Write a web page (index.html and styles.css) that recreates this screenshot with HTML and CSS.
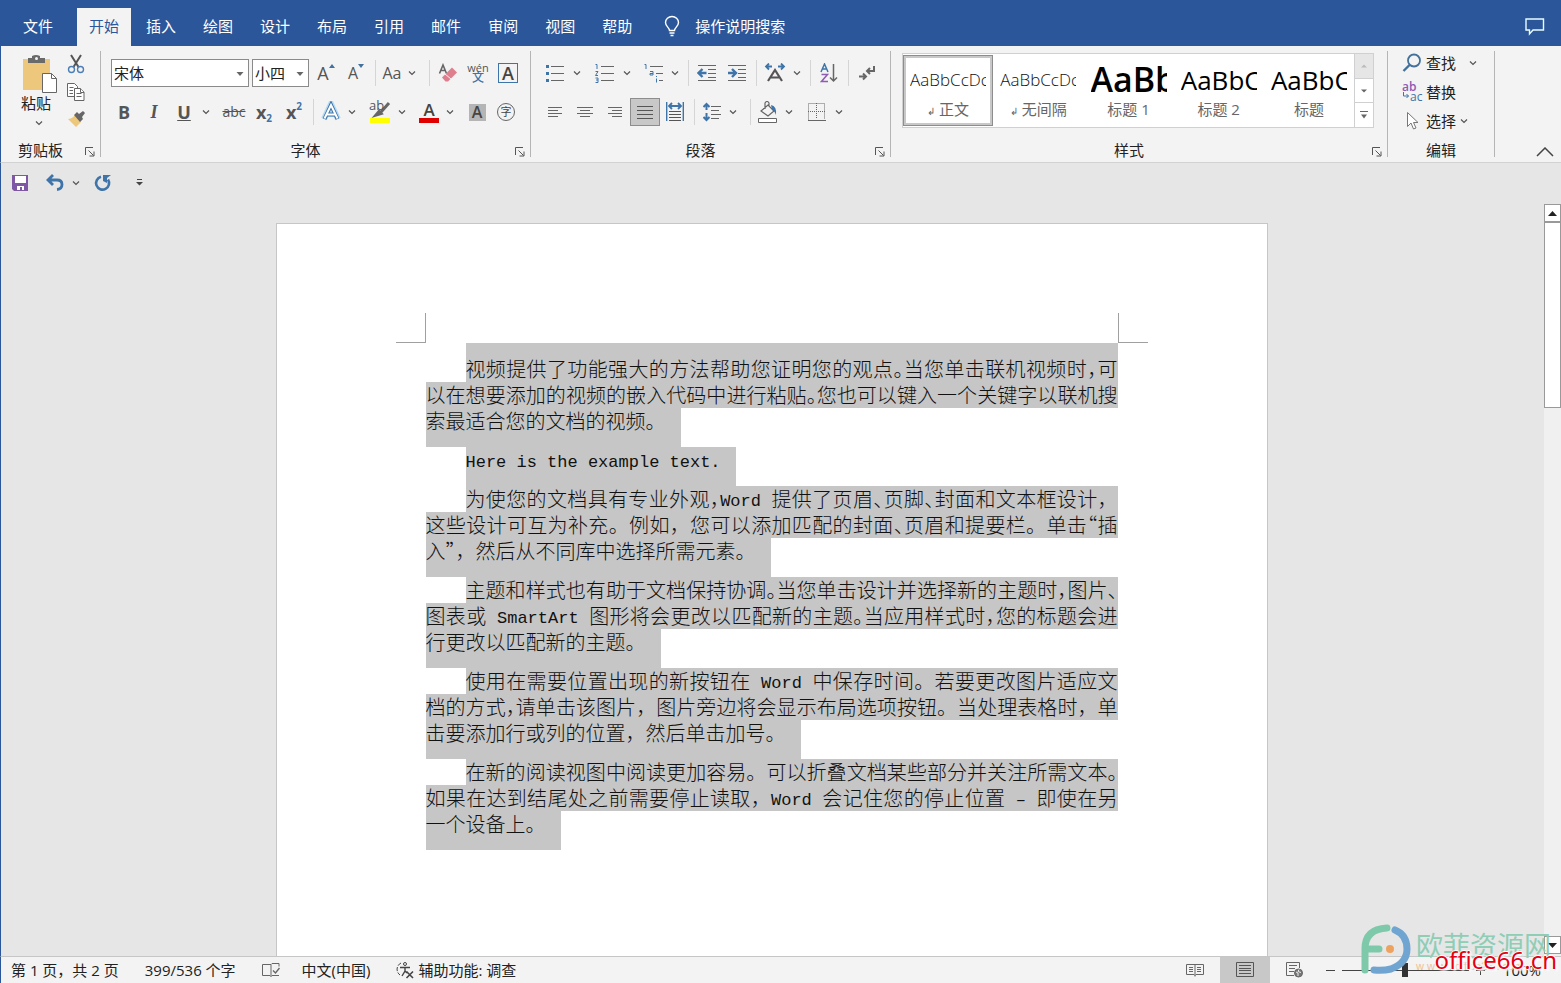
FILE: index.html
```html
<!DOCTYPE html>
<html lang="zh-CN">
<head>
<meta charset="utf-8">
<title>文档</title>
<link rel="stylesheet" href="styles.css">
</head>
<body>
<svg class="defs" aria-hidden="true">
  <symbol id="chev" viewBox="0 0 8 8"><path d="M1 2.500 4 5.500l3-3" fill="none" stroke="#555" stroke-width="1.200"/></symbol>
  <symbol id="launch" viewBox="0 0 10 10"><path d="M.5 8V.5H8M3.500 3.500l5 5M9 4.500V9H4.500" fill="none" stroke="#555"/></symbol>
</svg>

<header class="tabs">
  <button class="tab file">文件</button>
  <nav class="tab-list">
    <button class="tab active">开始</button>
    <button class="tab">插入</button>
    <button class="tab">绘图</button>
    <button class="tab">设计</button>
    <button class="tab">布局</button>
    <button class="tab">引用</button>
    <button class="tab">邮件</button>
    <button class="tab">审阅</button>
    <button class="tab">视图</button>
    <button class="tab">帮助</button>
  </nav>
  <button class="tell-me">
    <svg width="18" height="22" viewBox="0 0 18 22" fill="none" stroke="#fff" stroke-width="1.400"><path d="M6.500 15.500c0-3-4-4-4-8a6.500 6 0 0 1 13 0c0 4-4 5-4 8zM6.500 18h5M7.500 20.500h3"/></svg>
    <span>操作说明搜索</span>
  </button>
  <button class="comment" aria-label="批注">
    <svg width="20" height="18" viewBox="0 0 20 18" fill="none" stroke="#e8fbff" stroke-width="1.400"><path d="M1 1h17.500v11H8l-3.500 4v-4H1z"/></svg>
  </button>
</header>

<section class="ribbon">
  <div class="group clipboard">
    <div class="clip-body">
      <button class="paste">
        <svg width="36" height="38" viewBox="0 0 36 38"><path d="M2 4h27v31H2z" fill="#ecc77c"/><path d="M7 8V3h4V1q4-2 8 0v2h5v5z" fill="#6a6a6a"/><circle cx="15.500" cy="3.500" r="1.500" fill="#f3f3f3"/><path d="M21.500 18.500h9l5 5v14h-14z" fill="#fff" stroke="#666"/><path d="M30.500 18.500v5h5" fill="none" stroke="#666"/></svg>
        <span>粘贴</span>
        <svg width="8" height="8"><use href="#chev"/></svg>
      </button>
      <div class="clip-side">
        <button aria-label="剪切"><svg width="18" height="20" viewBox="0 0 18 20" fill="none"><path d="M4 1l7.500 12M14 1L6.500 13" stroke="#555" stroke-width="2"/><circle cx="4.500" cy="15.500" r="3" stroke="#4a7fb5" stroke-width="1.400"/><circle cx="13.500" cy="15.500" r="3" stroke="#4a7fb5" stroke-width="1.400"/></svg></button>
        <button aria-label="复制"><svg width="18" height="20" viewBox="0 0 18 20" fill="#fff" stroke="#666"><path d="M.5 1.500h7l3 3v10H.5z"/><path d="M7.500 6.500h6l3.500 3.500v8.500H7.500z"/><path d="M2.500 5.500h4M2.500 8.500h3.500M2.500 11.500h3.500M9.500 11.500h5M9.500 14.500h5M13.500 6.500v4h3.500"/></svg></button>
        <button aria-label="格式刷"><svg width="18" height="18" viewBox="0 0 18 18"><path d="M8 5l6 7-5 5-8-8q4 0 7-4z" fill="#ecc77c"/><path d="M7 5l3-3 2 2 4-3 2 2-3 4 1 2-3 3z" fill="#666"/></svg></button>
      </div>
    </div>
    <div class="group-foot"><span>剪贴板</span><button class="launch" aria-label="剪贴板选项"><svg width="10" height="10"><use href="#launch"/></svg></button></div>
  </div>

  <div class="group font">
    <div class="rows">
      <div class="row">
        <span class="combo family"><select aria-label="字体"><option>宋体</option></select><svg width="8" height="5"><path d="M.5 0h7L4 4z" fill="#666"/></svg></span>
        <span class="combo size"><select aria-label="字号"><option>小四</option></select><svg width="8" height="5"><path d="M.5 0h7L4 4z" fill="#666"/></svg></span>
        <button class="btn glyph" aria-label="增大字号">A<svg class="tick" width="6" height="4"><path d="M0 4l3-4 3 4z" fill="#41719c"/></svg></button>
        <button class="btn glyph small" aria-label="减小字号">A<svg class="tick" width="6" height="4"><path d="M0 0l3 4 3-4z" fill="#41719c"/></svg></button>
        <i class="sep"></i>
        <button class="btn narrow glyph small">Aa</button>
        <button class="chev" aria-label="更改大小写"><svg width="8" height="8"><use href="#chev"/></svg></button>
        <i class="sep"></i>
        <button class="btn" aria-label="清除格式"><svg width="20" height="20" viewBox="0 0 20 20"><path d="M1.500 10.500L5 2l3.500 8.500M2.500 7.500h5" fill="none" stroke="#666" stroke-width="1.600"/><path d="M14 4.500l5 5-9 9H7.500l-3.500-4z" fill="#df7f8d"/><path d="M7 11l6 5" stroke="#f3f3f3"/></svg></button>
        <button class="btn pinyin"><span>wén</span><b>文</b></button>
        <button class="btn" aria-label="字符边框"><span class="boxed">A</span></button>
      </div>
      <div class="row">
        <button class="btn glyph bold">B</button>
        <button class="btn glyph italic">I</button>
        <button class="btn glyph bold under">U</button>
        <button class="chev" aria-label="下划线样式"><svg width="8" height="8"><use href="#chev"/></svg></button>
        <button class="btn strike">abc</button>
        <button class="btn glyph bold">x<sub>2</sub></button>
        <button class="btn glyph bold">x<sup>2</sup></button>
        <i class="sep"></i>
        <button class="btn mid" aria-label="文本效果"><svg width="20" height="22" viewBox="0 0 20 22"><path d="M3 18L10 3l7 15M6 13h8" fill="none" stroke="#b5dbf4" stroke-width="6"/><path d="M3.500 18L10 4l6.500 14M6 13.500h8" fill="none" stroke="#3f74a8" stroke-width="4"/><path d="M3.500 17.500L10 4l6.500 13.500M6 13.500h8" fill="none" stroke="#fff" stroke-width="2"/></svg></button>
        <button class="chev" aria-label="更多文本效果"><svg width="8" height="8"><use href="#chev"/></svg></button>
        <button class="btn stack" aria-label="突出显示"><span>ab</span><svg width="22" height="22" viewBox="0 0 22 22"><path d="M20 2l-8 9M7 14l5-1.500-2-2z" stroke="#666" stroke-width="3"/><path d="M1 17h20v5H1z" fill="#ff0"/></svg></button>
        <button class="chev" aria-label="突出显示颜色"><svg width="8" height="8"><use href="#chev"/></svg></button>
        <button class="btn mid" aria-label="字体颜色"><span class="color-a">A</span></button>
        <button class="chev" aria-label="更多字体颜色"><svg width="8" height="8"><use href="#chev"/></svg></button>
        <button class="btn mid" aria-label="字符底纹"><span class="shaded">A</span></button>
        <button class="btn" aria-label="带圈字符"><span class="circled">字</span></button>
      </div>
    </div>
    <div class="group-foot"><span>字体</span><button class="launch" aria-label="字体选项"><svg width="10" height="10"><use href="#launch"/></svg></button></div>
  </div>

  <div class="group para">
    <div class="rows">
      <div class="row">
        <button class="btn" aria-label="项目符号"><svg width="20" height="18" viewBox="0 0 20 18"><path d="M6 2.500h13M6 9.500h13M6 16.500h13" stroke="#666"/><path d="M1 1h3v3H1zM1 8h3v3H1zM1 15h3v3H1z" fill="#3f74a8"/></svg></button>
        <button class="chev" aria-label="更多项目符号"><svg width="8" height="8"><use href="#chev"/></svg></button>
        <button class="btn" aria-label="编号"><svg width="20" height="20" viewBox="0 0 20 20"><path d="M6 3.500h13M6 10.500h13M6 17.500h13" stroke="#666"/><path d="M.5 1.500H2V6M.5 8.500H3L.5 12.500H3M.5 15H3v4.500H.5M1 17h2" fill="none" stroke="#3f74a8"/></svg></button>
        <button class="chev" aria-label="更多编号"><svg width="8" height="8"><use href="#chev"/></svg></button>
        <button class="btn mid" aria-label="多级列表"><svg width="20" height="20" viewBox="0 0 20 20"><path d="M6 3.500h13M12 10.500h7M15 17.500h4" stroke="#666"/><path d="M.5 1.500H2V6M6 8.500h3V12H6v-1.500h3M12.500 13v1M12.500 15.500v4" fill="none" stroke="#3f74a8"/></svg></button>
        <button class="chev tight" aria-label="更多多级列表"><svg width="8" height="8"><use href="#chev"/></svg></button>
        <i class="sep"></i>
        <button class="btn" aria-label="减少缩进"><svg width="20" height="18" viewBox="0 0 20 18"><path d="M1 1.500h18M11 5.500h8M11 9.500h8M11 13.500h8M1 16.500h18" stroke="#666"/><path d="M9.500 9H2M5.500 5l-4 4 4 4" fill="none" stroke="#3f74a8" stroke-width="2.400"/></svg></button>
        <button class="btn" aria-label="增加缩进"><svg width="20" height="18" viewBox="0 0 20 18"><path d="M1 1.500h18M11 5.500h8M11 9.500h8M11 13.500h8M1 16.500h18" stroke="#666"/><path d="M1 9h7.500M5 5l4 4-4 4" fill="none" stroke="#3f74a8" stroke-width="2.400"/></svg></button>
        <i class="sep"></i>
        <button class="btn" aria-label="中文版式"><svg width="22" height="20" viewBox="0 0 22 20" fill="none"><path d="M4 18L11 7l7 11M7 14.500h8" stroke="#555" stroke-width="2.200"/><path d="M8 3.500H2M5 .5l-3 3 3 3M14 3.500h6M17 .5l3 3-3 3" stroke="#3f74a8" stroke-width="1.800"/></svg></button>
        <button class="chev tight" aria-label="更多中文版式"><svg width="8" height="8"><use href="#chev"/></svg></button>
        <i class="sep"></i>
        <button class="btn" aria-label="排序"><svg width="18" height="20" viewBox="0 0 18 20" fill="none" stroke-width="1.500"><path d="M1 9l3.500-8L8 9M2 6h5" stroke="#3f74a8"/><path d="M1.500 11.500h6l-6 7H8" stroke="#8e5bb5"/><path d="M13.500 1v17M10 14.500l3.500 3.500 3.500-3.500" stroke="#666"/></svg></button>
        <i class="sep"></i>
        <button class="btn" aria-label="显示编辑标记"><svg width="18" height="16" viewBox="0 0 18 16" fill="none" stroke="#666" stroke-width="2"><path d="M16 1v5H9M12 3L9 6l3 3M1 11.500h7M5 8.500l3 3-3 3"/></svg></button>
      </div>
      <div class="row">
        <button class="btn" aria-label="左对齐"><svg width="16" height="12" stroke="#666"><path d="M1 1.500h14M1 4.500h10M1 7.500h14M1 10.500h10"/></svg></button>
        <button class="btn" aria-label="居中"><svg width="16" height="12" stroke="#666"><path d="M0 1.500h16M3 4.500h10M0 7.500h16M3 10.500h10"/></svg></button>
        <button class="btn" aria-label="右对齐"><svg width="16" height="12" stroke="#666"><path d="M1 1.500h14M5 4.500h10M1 7.500h14M5 10.500h10"/></svg></button>
        <button class="btn pressed" aria-label="两端对齐"><svg width="16" height="14" stroke="#555"><path d="M0 1.500h16M0 5.500h16M0 9.500h16M0 13.500h16"/></svg></button>
        <button class="btn" aria-label="分散对齐"><svg width="18" height="20" viewBox="0 0 18 20" fill="none"><path d="M.5 0v19M17.500 0v19M4 4h10M6 1L3 4l3 3M12 1l3 3-3 3" stroke="#3f74a8" stroke-width="1.800"/><path d="M3 9.500h12M3 12.500h12M3 15.500h12M3 18.500h12" stroke="#555"/></svg></button>
        <i class="sep"></i>
        <button class="btn mid" aria-label="行距"><svg width="18" height="20" viewBox="0 0 18 20" fill="none"><path d="M3.500 2v6M.5 5l3-3 3 3M3.500 11v7M.5 15l3 3 3-3" stroke="#3f74a8" stroke-width="2"/><path d="M8 4.500h10M8 8.500h8M8 12.500h10M8 16.500h8" stroke="#666"/></svg></button>
        <button class="chev" aria-label="更多行距"><svg width="8" height="8"><use href="#chev"/></svg></button>
        <i class="sep"></i>
        <button class="btn mid" aria-label="底纹"><svg width="22" height="22" viewBox="0 0 22 22" fill="none"><path d="M4 10l7-6 6 6-6 5zM8 8V2q2-3 4 0v3" stroke="#666" stroke-width="1.200"/><path d="M14 4q6 1 5 10-2-5-4-5z" fill="#3f74a8"/><path d="M1.500 17.500h18v4h-18z" fill="#fff" stroke="#666"/></svg></button>
        <button class="chev" aria-label="更多底纹"><svg width="8" height="8"><use href="#chev"/></svg></button>
        <button class="btn" aria-label="边框"><svg width="18" height="18" viewBox="0 0 18 18" fill="none" stroke="#666"><path d="M.5 16.500V.5h16v16M8.500 0v16M0 8.500h17" stroke-dasharray="1 1"/><path d="M0 17.500h18"/></svg></button>
        <button class="chev" aria-label="更多边框"><svg width="8" height="8"><use href="#chev"/></svg></button>
      </div>
    </div>
    <div class="group-foot"><span>段落</span><button class="launch" aria-label="段落选项"><svg width="10" height="10"><use href="#launch"/></svg></button></div>
  </div>

  <div class="group styles">
    <div class="gallery">
      <button class="style chosen"><span class="sample">AaBbCcDc</span><span class="name"><small>↲</small> 正文</span></button>
      <button class="style"><span class="sample">AaBbCcDc</span><span class="name"><small>↲</small> 无间隔</span></button>
      <button class="style"><span class="sample h1">AaBb</span><span class="name">标题 1</span></button>
      <button class="style"><span class="sample h2">AaBbC</span><span class="name">标题 2</span></button>
      <button class="style"><span class="sample h2">AaBbC</span><span class="name">标题</span></button>
      <div class="gallery-nav">
        <button class="off" aria-label="上一行"><svg width="6" height="4"><path d="M0 3.500h6l-3-3z" fill="#bbb"/></svg></button>
        <button aria-label="下一行"><svg width="6" height="4"><path d="M0 .5h6l-3 3z" fill="#666"/></svg></button>
        <button aria-label="更多样式"><svg width="8" height="8"><path d="M0 0h8v1H0zM1 3.500h6l-3 4z" fill="#666"/></svg></button>
      </div>
    </div>
    <div class="group-foot"><span>样式</span><button class="launch" aria-label="样式选项"><svg width="10" height="10"><use href="#launch"/></svg></button></div>
  </div>

  <div class="group edit">
    <div class="edit-body">
      <button class="edit-cmd find"><svg width="20" height="20" viewBox="0 0 20 20" fill="none" stroke="#41719c"><circle cx="12" cy="7.500" r="6" stroke-width="1.800"/><path d="M7.500 12l-6 6" stroke-width="2.400"/></svg><span>查找</span><svg width="8" height="8"><use href="#chev"/></svg></button>
      <button class="edit-cmd"><span class="swap"><b>ab</b><span><svg width="8" height="8" fill="none" stroke="#3f74a8"><path d="M1.500 0v4h5M4.500 2l2 2-2 2"/></svg>ac</span></span><span>替换</span></button>
      <button class="edit-cmd"><svg width="20" height="20" viewBox="0 0 20 20" fill="#fff" stroke="#777"><path d="M5.500 1.500v14l3.500-3.500 2.500 6 2.500-1-2.500-5.500h4.500z"/></svg><span>选择</span><svg width="8" height="8"><use href="#chev"/></svg></button>
    </div>
    <div class="group-foot plain"><span>编辑</span></div>
  </div>
  <button class="collapse" aria-label="折叠功能区"><svg width="18" height="10" fill="none" stroke="#444" stroke-width="1.500"><path d="M1 9l8-8 8 8"/></svg></button>
</section>

<div class="quick">
  <button aria-label="保存"><svg width="18" height="18" viewBox="0 0 18 18"><path d="M1 1h16v16H3l-2-2z" fill="#7e57a5"/><path d="M4 2h11v7H4zM6 12h7v4h-2v-3H9v3H6z" fill="#fff"/></svg></button>
  <button class="undo" aria-label="撤消"><svg width="18" height="17" viewBox="0 0 18 17" fill="none" stroke="#3f74a8" stroke-width="2.800"><path d="M2 6h9q5 0 5 4.500T11 15.500M7 1L2 6l5 5"/></svg></button>
  <button aria-label="撤消列表"><svg width="8" height="8"><use href="#chev"/></svg></button>
  <button class="redo" aria-label="重复"><svg width="18" height="18" viewBox="0 0 18 18"><path d="M7 2.800A6.500 6.500 0 1 0 14 5.500" fill="none" stroke="#3f74a8" stroke-width="2.600"/><path d="M9 1h8l-4 3v5L9 7z" fill="#3f74a8"/></svg></button>
  <button class="custom" aria-label="自定义快速访问工具栏"><svg width="7" height="7"><path d="M1 0h5v1H1zM0 3h7L3.500 6.500z" fill="#444"/></svg></button>
</div>

<main class="workspace">
  <div class="canvas">
    <article class="sheet">
      <div class="marks"><i class="mark-l"></i><i class="mark-r"></i></div>
      <div class="text">
        <p class="first">
          <span class="line in">视频提供了功能强大的方法帮助您证明您的观点<q>。</q>当您单击联机视频时<q>&#xFF0C;</q>可</span>
          <span class="line">以在想要添加的视频的嵌入代码中进行粘贴<q>。</q>您也可以键入一个关键字以联机搜</span>
          <span class="line end">索最适合您的文档的视频。</span>
        </p>
        <p><span class="line in end"><code>Here is the example text.</code></span></p>
        <p>
          <span class="line in">为使您的文档具有专业外观<q>&#xFF0C;</q><code>Word </code>提供了页眉<q>、</q>页脚<q>、</q>封面和文本框设计&#xFF0C;</span>
          <span class="line">这些设计可互为补充。例如&#xFF0C;您可以添加匹配的封面<q>、</q>页眉和提要栏。单击<q>“</q>插</span>
          <span class="line end">入<q>”</q>&#xFF0C;然后从不同库中选择所需元素。</span>
        </p>
        <p>
          <span class="line in">主题和样式也有助于文档保持协调<q>。</q>当您单击设计并选择新的主题时<q>&#xFF0C;</q>图片<q>、</q></span>
          <span class="line">图表或<code> SmartArt </code>图形将会更改以匹配新的主题<q>。</q>当应用样式时<q>&#xFF0C;</q>您的标题会进</span>
          <span class="line end">行更改以匹配新的主题。</span>
        </p>
        <p>
          <span class="line in">使用在需要位置出现的新按钮在<code> Word </code>中保存时间。若要更改图片适应文</span>
          <span class="line">档的方式<q>&#xFF0C;</q>请单击该图片&#xFF0C;图片旁边将会显示布局选项按钮。当处理表格时&#xFF0C;单</span>
          <span class="line end">击要添加行或列的位置&#xFF0C;然后单击加号。</span>
        </p>
        <p>
          <span class="line in">在新的阅读视图中阅读更加容易。可以折叠文档某些部分并关注所需文本<q>。</q></span>
          <span class="line">如果在达到结尾处之前需要停止读取&#xFF0C;<code>Word </code>会记住您的停止位置<code> – </code>即使在另</span>
          <span class="line end">一个设备上。</span>
        </p>
      </div>
    </article>
  </div>
  <div class="scroll">
    <button aria-label="向上滚动"><svg width="9" height="5"><path d="M0 5l4.500-5L9 5z" fill="#222"/></svg></button>
    <div class="track"><div class="thumb"></div></div>
    <button aria-label="向下滚动"><svg width="9" height="5"><path d="M0 0l4.500 5L9 0z" fill="#222"/></svg></button>
  </div>
</main>

<footer class="status">
  <button class="pages">第 1 页&#xFF0C;共 2 页</button>
  <button class="words">399/536 个字</button>
  <button class="proof" aria-label="校对"><svg width="18" height="16" viewBox="0 0 18 16" fill="none" stroke="#666"><path d="M9 2.500v12M9 2.500H.5v11H8l1 1 1-1h7M9 2.500l1-1h7v3"/><path d="M11 8.500l2.500 2.500 4-5" stroke-width="1.400"/></svg></button>
  <button class="lang">中文(中国)</button>
  <button class="access"><svg width="18" height="18" viewBox="0 0 18 18" fill="none" stroke="#444"><path d="M5 2A7 7 0 0 0 4 14" stroke-dasharray="4 1.500"/><circle cx="9" cy="3" r="1.500"/><path d="M4 6.500h10M9 7v3l-3 5M9 10l2 2" stroke-width="1.400"/><path d="M10.500 10.500l6.500 6.500M17 10.500L10.500 17" stroke-width="1.600"/></svg><span>辅助功能: 调查</span></button>
  <div class="views">
    <button aria-label="阅读视图"><svg width="18" height="14" viewBox="0 0 18 14" fill="none" stroke="#666"><path d="M9 1.500v12M9 1.500H.5v10H8l1 1 1-1h7.500v-10zM3 4.500h4M3 6.500h4M3 8.500h4M11 4.500h4M11 6.500h4M11 8.500h4"/></svg></button>
    <button class="on" aria-label="页面视图"><svg width="18" height="16" fill="none" stroke="#555"><path d="M.5 .5h17v14H.5zM3 3.500h12M3 6.500h12M3 8.500h12M3 11.500h12"/></svg></button>
    <button aria-label="Web 版式视图"><svg width="18" height="16" viewBox="0 0 18 16" fill="none" stroke="#666"><path d="M8 13.500H.5V.5h13V6M3 3.500h8M3 6.500h6M3 9.500h5"/><circle cx="12.500" cy="11" r="4" fill="#777"/><path d="M10 10l2 1v3M13 7.500l-1 2 3 1" stroke="#eee"/></svg></button>
  </div>
  <button class="step" aria-label="缩小"><svg width="9" height="9" stroke="#444"><path d="M0 4.500h9"/></svg></button>
  <input class="zoom" type="range" min="0" max="100" value="50" aria-label="显示比例">
  <button class="step" aria-label="放大"><svg width="9" height="9" stroke="#444"><path d="M0 4.500h9M4.500 0v9"/></svg></button>
  <button class="percent">100%</button>
</footer>

<aside class="watermark">
  <svg width="50" height="50" viewBox="0 0 50 50" fill="none" stroke-linecap="round"><path d="M26 4Q4 5 4 25v21" stroke="#7dc9aa" stroke-width="7"/><path d="M5 25h13" stroke="#7dc9aa" stroke-width="7"/><path d="M34 6q12 5 12 19T30 45q-8 2-17 1" stroke="#70a5d2" stroke-width="7"/><circle cx="29" cy="25" r="4" fill="#eda35f"/></svg>
  <div class="mark-text"><strong>欧菲资源网</strong><span>w w w . office26 . com</span></div>
  <a href="#">office66.cn</a>
</aside>
</body>
</html>
```

FILE: styles.css
```css
* { box-sizing: border-box; }
body {
  margin: 0;
  height: 100vh;
  overflow: hidden;
  display: flex;
  flex-direction: column;
  position: relative;
  background: #e6e6e6;
  font: 15px/20px "Open Sans", "Noto Sans CJK SC", sans-serif;
  color: #222;
}
button {
  font: inherit;
  color: inherit;
  background: none;
  border: 0;
  padding: 0;
  margin: 0;
  white-space: nowrap;
}
button, .row, .combo { display: flex; align-items: center; justify-content: center; }
svg { flex: none; display: block; }
.defs { position: absolute; width: 0; height: 0; }

/* Tabs */
.tabs {
  flex: none;
  height: 46px;
  padding: 8px 16px 0 11px;
  display: flex;
  background: #2b579a;
  color: #fff;
}
.tab-list { display: flex; gap: 3px; margin-left: 12px; }
.tab { padding: 0 12px 2px; }
.tab.active { background: #f3f3f3; color: #2b579a; }
.tell-me { margin-left: 19px; padding-bottom: 2px; gap: 14px; }
.comment { margin-left: auto; }

/* Ribbon */
.ribbon {
  flex: none;
  display: flex;
  height: 117px;
  padding: 5px 0;
  background: #f3f3f3;
  border-bottom: 1px solid #d2d2d2;
  border-left: 1px solid #2b579a;
}
.group {
  display: flex;
  flex-direction: column;
  justify-content: space-between;
  border-right: 1px solid #b5b5b5;
}
.clipboard { width: 100px; }
.font { width: 430px; }
.para { width: 360px; }
.styles { width: 497px; }
.edit { width: 107px; }
.group-foot { display: flex; height: 14px; line-height: 14px; align-items: center; }
.group-foot span { flex: 1; text-align: center; }
.launch { width: 20px; height: 14px; align-items: flex-end; }
.clip-body { display: flex; gap: 8px; padding-left: 20px; }
.paste { flex-direction: column; width: 36px; padding-top: 3px; font-size: 15px; }
.paste span { align-self: flex-start; margin-bottom: 6px; }
.clip-side { display: flex; flex-direction: column; gap: 8px; padding: 3px 0 0 2px; }
.rows { display: flex; flex-direction: column; gap: 11px; padding: 8px 0 0 8px; }
.para .rows { padding-left: 9px; }
.row { height: 28px; justify-content: flex-start; }
.combo { position: relative; height: 28px; }
.family { width: 138px; margin: 0 3px 0 2px; }
.size { width: 57px; margin-right: 2px; }
.combo select {
  appearance: none;
  width: 100%;
  height: 28px;
  padding: 0 2px;
  border: 1px solid #8a8a8a;
  border-radius: 0;
  background: #fff;
  color: #222;
  font: inherit;
}
.combo svg { position: absolute; right: 5px; top: 13px; }
.btn { width: 30px; height: 28px; color: #555; }
.btn.narrow { width: 26px; }
.btn.mid { width: 28px; }
.btn.pressed { background: #c8c8c8; border: 1px solid #8d8d8d; }
.chev { width: 20px; height: 28px; justify-content: flex-start; padding-left: 3px; }
.chev.tight { width: 16px; }
.sep { width: 1px; height: 26px; margin: 0 3px 0 4px; background: #d5d5d5; }
.glyph { font-size: 18px; font-weight: 500; }
.small { font-size: 16px; }
.bold { font-weight: 700; }
.italic { font-family: "Liberation Serif", serif; font-style: italic; font-weight: 700; }
.under { text-decoration: underline; }
.tick { align-self: flex-start; margin-top: 5px; }
.strike { font-size: 14px; text-decoration: line-through; }
.glyph sub, .glyph sup { font-size: 10px; color: #3f74a8; line-height: 10px; }
.glyph sub { align-self: flex-end; margin-bottom: 3px; }
.glyph sup { align-self: flex-start; margin-top: 3px; }
.pinyin { flex-direction: column; font-size: 11px; line-height: 9px; }
.pinyin b { font-size: 12px; line-height: 12px; font-weight: 500; color: #3f74a8; }
.boxed, .shaded, .circled, .color-a { display: block; text-align: center; color: #444; }
.boxed { width: 20px; height: 20px; border: 1px solid #3f74a8; font-size: 18px; line-height: 18px; font-weight: 600; }
.shaded { width: 17px; height: 17px; background: #b5b5b5; font-size: 16px; line-height: 17px; font-weight: 600; }
.circled { width: 18px; height: 18px; border: 1px solid #666; border-radius: 50%; font-size: 11px; line-height: 16px; }
.color-a { width: 20px; height: 21px; border-bottom: 5px solid #e00000; font-size: 17px; line-height: 15px; font-weight: 600; }
.stack { position: relative; }
.stack span { position: absolute; left: 4px; top: 0; font-size: 13px; line-height: 14px; }

/* Style gallery */
.gallery { display: flex; height: 75px; margin: 2px 0 0 11px; width: 472px; background: #fff; border: 1px solid #d0d0d0; }
.style { flex: 1; flex-direction: column; justify-content: flex-start; margin: 1px 0; padding-top: 6px; min-width: 0; color: #666; border: 3px solid transparent; }
.style.chosen { border-color: #c8c8c8; outline: 1px solid #8d8d8d; outline-offset: -1px; }
.sample { width: 76px; height: 32px; overflow: hidden; text-align: left; font-size: 17px; line-height: 32px; font-weight: 300; color: #111; }
.sample.h1 { font-size: 34px; line-height: 30px; font-weight: 600; color: #000; }
.sample.h2 { font-size: 26px; line-height: 32px; font-weight: 400; color: #000; }
.name small { font-size: 10px; }
.name { line-height: 20px; padding-top: 3px; }
.gallery-nav { width: 19px; display: flex; flex-direction: column; border-left: 1px solid #d0d0d0; }
.gallery-nav button { flex: 1; }
.gallery-nav button + button { border-top: 1px solid #d0d0d0; }
.gallery-nav .off { background: #e6e6e6; }
.edit-body { display: flex; flex-direction: column; align-items: flex-start; gap: 9px; padding: 2px 0 0 14px; }
.edit-cmd { height: 20px; gap: 4px; }
.find svg:last-child { margin-left: 9px; }
.swap { display: flex; flex-direction: column; width: 20px; font-size: 12px; line-height: 10px; text-align: left; color: #3f74a8; }
.swap b { color: #8e5bb5; font-weight: 600; }
.swap span { display: flex; }
.collapse { margin: auto 7px 0 auto; }

/* Quick access */
.quick {
  flex: none;
  height: 41px;
  display: flex;
  align-items: center;
  padding: 0 0 2px 10px;
  border-left: 1px solid #2b579a;
}
.undo { margin: 0 8px 0 17px; }
.redo { margin-left: 14px; }
.custom { margin-left: 24px; }

/* Document */
.workspace { flex: 1; min-height: 0; display: flex; border-left: 1px solid #2b579a; }
.canvas { flex: 1; overflow: hidden; padding: 19px 2px 0 0; display: flex; justify-content: center; }
.sheet {
  width: 100%;
  max-width: 992px;
  min-height: 1400px;
  padding: 89px 119px;
  background: #fff;
  border: 1px solid #c6c6c6;
}
.marks { display: flex; justify-content: space-between; }
.marks i { width: 30px; height: 30px; border-bottom: 1px solid #a0a0a0; }
.mark-l { border-right: 1px solid #a0a0a0; }
.mark-r { border-left: 1px solid #a0a0a0; }
.text {
  padding: 0 30px;
  font: 300 20px/26px "Noto Sans CJK SC", sans-serif;
  color: #111;
}
.text p { margin: 0; }
.line {
  display: block;
  height: 26px;
  white-space: nowrap;
  text-align: justify;
  text-align-last: justify;
  background: #c6c6c6;
}
.line.in { margin-left: 40px; }
.line.end {
  width: fit-content;
  height: 39px;
  padding-right: 15px;
  text-align: left;
  text-align-last: left;
}
.first .in { height: 39px; padding-top: 13px; }
.text q { quotes: none; font-feature-settings: "halt"; }
.text code { font: 17px/20px "Liberation Mono", monospace; vertical-align: 1px; white-space: pre-wrap; }

.scroll { width: 17px; display: flex; flex-direction: column; background: #f0f0f0; padding-bottom: 2px; }
.scroll button { height: 18px; background: #fff; border: 1px solid #999; }
.track { flex: 1; }
.thumb { height: 26%; background: #fff; border: 1px solid #999; }

/* Status bar */
.status {
  flex: none;
  height: 27px;
  display: flex;
  align-items: center;
  padding: 0 20px 0 10px;
  background: #f3f3f3;
  border-top: 1px solid #c6c6c6;
  border-left: 1px solid #2b579a;
}
.words { margin-left: 26px; }
.proof { margin: 0 22px 0 26px; }
.access { margin-left: 26px; gap: 4px; }
.views { display: flex; align-self: stretch; margin: 0 6px 0 auto; }
.views button { width: 50px; }
.views .on { background: #c8c8c8; }
.zoom { appearance: none; width: 127px; height: 14px; margin: 0 7px; background: linear-gradient(#444, #444) center / 100% 1px no-repeat; }
.zoom::-webkit-slider-thumb { appearance: none; width: 6px; height: 14px; background: #333; }
.percent { margin-left: 18px; }

/* Watermark */
.watermark { position: absolute; right: 4px; bottom: 9px; width: 196px; height: 50px; display: flex; gap: 5px; }
.mark-text { display: flex; flex-direction: column; padding-top: 8px; }
.mark-text strong { font-size: 27px; line-height: 28px; font-weight: 400; color: #8fcdb5; white-space: nowrap; }
.mark-text span { font: 11px/12px "Liberation Sans", sans-serif; color: #edc193; white-space: nowrap; }
.watermark a {
  position: absolute;
  right: 0;
  bottom: 0;
  font: 24px/28px "Noto Sans", sans-serif;
  font-variant-ligatures: none;
  color: #e60012;
  text-decoration: none;
  text-shadow: 1px 0 #fff, -1px 0 #fff, 0 1px #fff, 0 -1px #fff, 2px 2px 2px #fff;
}
```
